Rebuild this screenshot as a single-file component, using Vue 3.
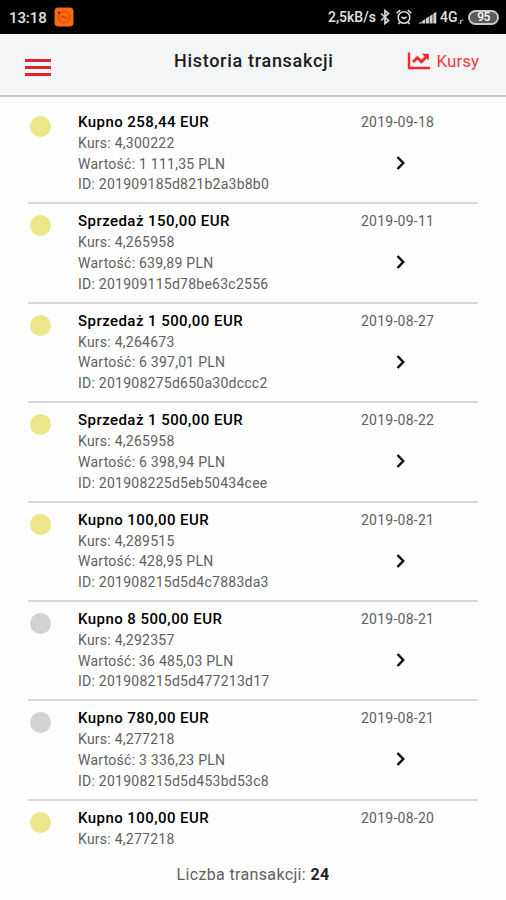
<script setup>
import { ref } from 'vue';

const transactions = ref([
  { title: 'Kupno 258,44 EUR', rate: '4,300222', value: '1 111,35', id: '201909185d821b2a3b8b0', date: '2019-09-18', active: true },
  { title: 'Sprzedaż 150,00 EUR', rate: '4,265958', value: '639,89', id: '201909115d78be63c2556', date: '2019-09-11', active: true },
  { title: 'Sprzedaż 1 500,00 EUR', rate: '4,264673', value: '6 397,01', id: '201908275d650a30dccc2', date: '2019-08-27', active: true },
  { title: 'Sprzedaż 1 500,00 EUR', rate: '4,265958', value: '6 398,94', id: '201908225d5eb50434cee', date: '2019-08-22', active: true },
  { title: 'Kupno 100,00 EUR', rate: '4,289515', value: '428,95', id: '201908215d5d4c7883da3', date: '2019-08-21', active: true },
  { title: 'Kupno 8 500,00 EUR', rate: '4,292357', value: '36 485,03', id: '201908215d5d477213d17', date: '2019-08-21', active: false },
  { title: 'Kupno 780,00 EUR', rate: '4,277218', value: '3 336,23', id: '201908215d5d453bd53c8', date: '2019-08-21', active: false },
  { title: 'Kupno 100,00 EUR', rate: '4,277218', date: '2019-08-20', active: true },
])
const total = ref(24)
</script>

<template>
  <div class="screen">
    <div class="status-bar">
      <span class="clock">13:18</span>
      <svg class="app-icon" width="20" height="20" viewBox="0 0 20 20">
        <rect x="0.5" y="0.5" width="19" height="19" rx="4" fill="#f9680f" />
        <circle cx="10" cy="10" r="5.8" fill="none" stroke="#c9530e" stroke-width="1.1" />
        <path d="M7 10.2c1-1.600 2-1.600 3 0s2 1.600 3 0M7 10.200h6" fill="none" stroke="#b84a0c" stroke-width="1" />
        <circle cx="5.200" cy="5.600" r="1.200" fill="#5a2408" />
      </svg>
      <div class="status-right">
        <span class="speed">2,5kB/s</span>
        <svg class="bluetooth" width="10" height="16" viewBox="0 0 10 16">
          <path d="M1 4.500l7.500 7L5 14.500V1.500l3.500 3L1 11.500" fill="none" stroke="#d6d6d6" stroke-width="1.700" />
        </svg>
        <svg class="alarm" width="16" height="16" viewBox="0 0 16 16" fill="none" stroke="#d6d6d6" stroke-width="1.600">
          <circle cx="8" cy="8.500" r="5.800" />
          <path d="M5.500 8l2.500 1.500L10.500 8M.8 4.200l3.400-3M15.200 4.200l-3.400-3M4 13l-1.500 2M12 13l1.500 2" />
        </svg>
        <svg class="signal" width="19" height="13" viewBox="0 0 19 13" fill="#d0d0d0">
          <path d="M0 12.500L3.700 10.500v2zM4.200 10l3-2v4.500h-3zM7.900 7.600l3-2v6.900h-3zM11.600 5.200l3-2v9.300h-3zM15.300 2.800l3-2v11.700h-3z" />
        </svg>
        <span class="network">4G</span>
        <svg class="roaming" width="6" height="5" viewBox="0 0 6 5">
          <path d="M0 4h1.500M2.700 5V1M2.700 2.200Q3.500 1 5.500 1" fill="none" stroke="#bdbdbd" stroke-width="1.200" />
        </svg>
        <span class="battery">95</span>
      </div>
    </div>

    <header class="header">
      <div class="menu">
        <span></span>
        <span></span>
        <span></span>
      </div>
      <h1>Historia transakcji</h1>
      <div class="rates">
        <svg width="24" height="18" viewBox="0 0 24 18" fill="none" stroke="#f8272b">
          <path d="M2 0.500v15.500h21" stroke-width="2.400" />
          <path d="M6 10l4.300-4.300 4.200 4L19.500 4.700" stroke-width="2.800" />
          <path d="M14.800 1.800h7v7z" fill="#f8272b" stroke="none" />
        </svg>
        <span>Kursy</span>
      </div>
    </header>

    <div class="list">
      <div class="row" v-for="(item, index) in transactions" :key="index">
        <span class="dot" :class="{ active: item.active }"></span>
        <div class="details">
          <div class="title">{{ item.title }}</div>
          <div>Kurs: {{ item.rate }}</div>
          <div v-if="item.value">Wartość: {{ item.value }} PLN</div>
          <div v-if="item.id">ID: {{ item.id }}</div>
        </div>
        <div class="side">
          <span>{{ item.date }}</span>
          <svg v-if="item.id" width="10" height="16" viewBox="0 0 10 16">
            <path d="M1.500 2l5.700 6-5.700 6" fill="none" stroke="#111" stroke-width="2.500" />
          </svg>
        </div>
      </div>
    </div>

    <footer class="footer">Liczba transakcji: <b>{{ total }}</b></footer>
  </div>
</template>

<style>
body {
  margin: 0;
  background: #fefefe;
}
</style>

<style scoped>
.screen {
  display: flex;
  flex-direction: column;
  width: 506px;
  height: 900px;
  overflow: hidden;
  background: #fefefe;
  font-family: Roboto, "Liberation Sans", sans-serif;
  color: #606060;
}

.status-bar {
  display: flex;
  align-items: center;
  box-sizing: border-box;
  height: 34px;
  flex: none;
  padding: 0 7px 0 9px;
  background: #000;
  color: #e4e4e4;
  font-weight: 500;
}

.clock {
  width: 45px;
  font-size: 15px;
  line-height: 34px;
  letter-spacing: -0.1px;
  padding-top: 1px;
}

.status-right {
  display: flex;
  align-items: center;
  margin-left: auto;
}

.speed {
  width: 50px;
  font-size: 14px;
  white-space: nowrap;
}

.bluetooth {
  margin-left: 2px;
}

.alarm {
  margin-left: 6px;
}

.signal {
  margin: 0 3px 0 6px;
}

.network {
  width: 18px;
  font-size: 14px;
}

.roaming {
  margin: 8px 4px 0 0;
}

.battery {
  box-sizing: border-box;
  width: 31px;
  height: 15px;
  border: 2px solid #c9c9c9;
  border-radius: 8px;
  background: #5c5c5c;
  color: #fff;
  font-size: 12px;
  line-height: 11px;
  letter-spacing: -0.5px;
  text-align: center;
}

.header {
  display: flex;
  box-sizing: border-box;
  height: 63px;
  flex: none;
  padding: 0 27px 0 25px;
  border-bottom: 2px solid #c6c7c9;
  background: #f4f5f7;
}

.menu {
  display: flex;
  flex-direction: column;
  gap: 4px;
  width: 26px;
  padding-top: 25px;
}

.menu span {
  height: 3px;
  background: #e0212b;
}

h1 {
  margin: 0 0 0 123px;
  color: #1c1c1e;
  font-size: 18px;
  font-weight: 500;
  line-height: 54px;
  letter-spacing: 0.7px;
  white-space: nowrap;
}

.rates {
  display: flex;
  gap: 6px;
  margin-left: auto;
  padding-top: 18px;
  color: #f8373b;
  font-size: 17px;
  line-height: 19px;
}

.list {
  flex: none;
  height: 752px;
  padding: 8px 28px 0;
  box-sizing: border-box;
}

.row {
  display: flex;
  box-sizing: border-box;
  height: 99.4px;
  padding-top: 6px;
  border-bottom: 2px solid #d8d8d8;
}

.row:last-child {
  border: none;
}

.dot {
  width: 21px;
  height: 21px;
  flex: none;
  margin: 5px 27px 0 2px;
  border-radius: 50%;
  background: #d3d3d3;
}

.dot.active {
  background: #ede58a;
}

.details {
  width: 283px;
  font-size: 14px;
  line-height: 20.7px;
  letter-spacing: 0.25px;
}

.title {
  color: #000;
  font-size: 15px;
  font-weight: 500;
  line-height: 22px;
  letter-spacing: 0.44px;
}

.side {
  font-size: 14px;
  line-height: 22px;
  letter-spacing: 0.25px;
}

.side svg {
  display: block;
  margin: 22px 0 0 35px;
}

.footer {
  padding-top: 15px;
  font-size: 16px;
  line-height: 22px;
  letter-spacing: 0.35px;
  text-align: center;
}

.footer b {
  color: #222;
  font-weight: 700;
}
</style>
